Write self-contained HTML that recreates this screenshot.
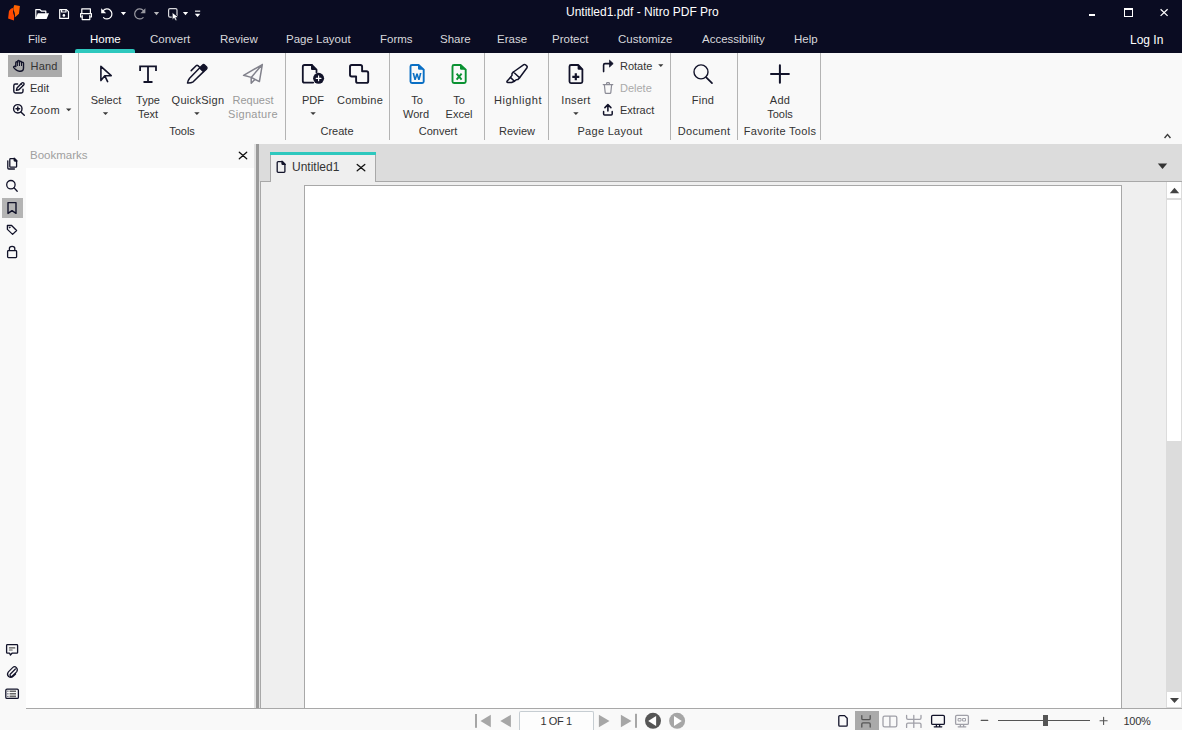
<!DOCTYPE html>
<html><head><meta charset="utf-8">
<style>
*{margin:0;padding:0;box-sizing:border-box}
html,body{width:1182px;height:730px;overflow:hidden;background:#f9f9f9;font-family:"Liberation Sans",sans-serif}
.a{position:absolute}
.t{position:absolute;margin-top:-1px;white-space:nowrap;line-height:11px;font-size:11px;color:#333}
.c{position:absolute;margin-top:-1px;white-space:nowrap;line-height:11px;font-size:11px;color:#333;width:120px;text-align:center}
.hdr{left:0;top:0;width:1182px;height:53px;background:#0a0c22}
.tab{position:absolute;top:34px;font-size:11.5px;line-height:11px;color:#d8d8dc;white-space:nowrap}
.sep{position:absolute;top:53px;width:1px;height:87px;background:#b4b4b4}
svg{position:absolute;overflow:visible}
</style></head><body>
<!-- header -->
<div class="a hdr"></div>
<div class="a" style="left:75px;top:49px;width:60px;height:4px;background:#2ec8be;border-radius:2px 2px 0 0"></div>
<div class="tab" style="left:28px">File</div>
<div class="tab" style="left:90px;color:#fff">Home</div>
<div class="tab" style="left:150px">Convert</div>
<div class="tab" style="left:220px">Review</div>
<div class="tab" style="left:286px">Page Layout</div>
<div class="tab" style="left:380px">Forms</div>
<div class="tab" style="left:440px">Share</div>
<div class="tab" style="left:497px">Erase</div>
<div class="tab" style="left:552px">Protect</div>
<div class="tab" style="left:618px">Customize</div>
<div class="tab" style="left:702px">Accessibility</div>
<div class="tab" style="left:794px">Help</div>
<div class="tab" style="left:1130px;top:35px;color:#fff;font-size:12px">Log In</div>
<div class="tab" style="left:566px;top:7px;color:#fff;font-size:12px">Untitled1.pdf - Nitro PDF Pro</div>

<!-- ribbon -->
<div class="a" style="left:8px;top:55px;width:54px;height:22px;background:#ababab"></div>
<div class="t" style="left:30.5px;top:62px;letter-spacing:0.2px">Hand</div>
<div class="t" style="left:30px;top:84px">Edit</div>
<div class="t" style="left:30px;top:106px;letter-spacing:0.5px">Zoom</div>
<div class="sep" style="left:78px"></div>
<div class="sep" style="left:285px"></div>
<div class="sep" style="left:389px"></div>
<div class="sep" style="left:484px"></div>
<div class="sep" style="left:548px"></div>
<div class="sep" style="left:670px"></div>
<div class="sep" style="left:737px"></div>
<div class="sep" style="left:820px"></div>

<div class="c" style="left:46px;top:96px">Select</div>
<div class="c" style="left:88px;top:96px">Type</div>
<div class="c" style="left:88px;top:110px">Text</div>
<div class="c" style="left:138px;top:96px;letter-spacing:0.3px">QuickSign</div>
<div class="c" style="left:193px;top:96px;color:#999">Request</div>
<div class="c" style="left:193px;top:110px;color:#999;letter-spacing:0.3px">Signature</div>
<div class="c" style="left:122px;top:127px">Tools</div>
<div class="c" style="left:253px;top:96px">PDF</div>
<div class="c" style="left:300px;top:96px;letter-spacing:0.3px">Combine</div>
<div class="c" style="left:277px;top:127px">Create</div>
<div class="c" style="left:357px;top:96px">To</div>
<div class="c" style="left:356px;top:110px">Word</div>
<div class="c" style="left:399px;top:96px">To</div>
<div class="c" style="left:399px;top:110px">Excel</div>
<div class="c" style="left:378px;top:127px">Convert</div>
<div class="c" style="left:458px;top:96px;letter-spacing:0.6px">Highlight</div>
<div class="c" style="left:457px;top:127px">Review</div>
<div class="c" style="left:516px;top:96px;letter-spacing:0.3px">Insert</div>
<div class="t" style="left:620px;top:62px">Rotate</div>
<div class="t" style="left:620px;top:84px;color:#aaa">Delete</div>
<div class="t" style="left:620px;top:106px">Extract</div>
<div class="c" style="left:550px;top:127px;letter-spacing:0.3px">Page Layout</div>
<div class="c" style="left:643px;top:96px;letter-spacing:0.3px">Find</div>
<div class="c" style="left:644px;top:127px;letter-spacing:0.3px">Document</div>
<div class="c" style="left:720px;top:96px;letter-spacing:0.3px">Add</div>
<div class="c" style="left:720px;top:110px">Tools</div>
<div class="c" style="left:720px;top:127px;letter-spacing:0.3px">Favorite Tools</div>

<!-- workspace -->
<div class="a" style="left:0;top:144px;width:26px;height:586px;background:#f9f9f9"></div>
<div class="a" style="left:26px;top:144px;width:228px;height:24px;background:#f9f9f9"></div>
<div class="a" style="left:26px;top:168px;width:228px;height:540px;background:#fff"></div>
<div class="t" style="left:30px;top:151px;color:#a0a0a0;font-size:11.5px">Bookmarks</div>
<div class="a" style="left:2px;top:198px;width:21px;height:20px;background:#b4b4b4"></div>
<div class="a" style="left:254px;top:144px;width:2px;height:564px;background:#e2e2e2"></div>
<div class="a" style="left:256px;top:144px;width:3px;height:564px;background:#9a9a9a"></div>
<div class="a" style="left:259px;top:144px;width:923px;height:38px;background:#dcdcdc"></div>
<div class="a" style="left:259px;top:182px;width:1px;height:526px;background:#e2e2e2"></div>
<div class="a" style="left:260px;top:181px;width:922px;height:527px;background:#efefef;border-left:1px solid #a8a8a8;border-top:1px solid #a8a8a8"></div>
<div class="a" style="left:270px;top:152px;width:106px;height:30px;background:#efefef;border-left:1px solid #a8a8a8;border-right:1px solid #a8a8a8"></div>
<div class="a" style="left:271px;top:181px;width:104px;height:1px;background:#efefef"></div>
<div class="a" style="left:270px;top:152px;width:106px;height:3px;background:#2ec8be"></div>
<div class="t" style="left:292px;top:163px;font-size:12px">Untitled1</div>
<div class="a" style="left:304px;top:185px;width:818px;height:523px;background:#fff;border:1px solid #a8a8a8;border-bottom:none"></div>
<!-- scrollbar -->
<div class="a" style="left:1166px;top:182px;width:16px;height:526px;background:#dcdcdc"></div>
<div class="a" style="left:1167px;top:182px;width:14px;height:16px;background:#fff"></div>
<div class="a" style="left:1167px;top:200px;width:14px;height:241px;background:#fff"></div>
<div class="a" style="left:1167px;top:692px;width:14px;height:15px;background:#fff"></div>

<!-- status bar -->
<div class="a" style="left:26px;top:708px;width:1156px;height:22px;background:#f9f9f9;border-top:1px solid #a8a8a8"></div>
<div class="a" style="left:519px;top:711px;width:75px;height:19px;background:#fdfdfd;border:1px solid #c6cdd2;border-bottom:none;border-radius:2px 2px 0 0"></div>
<div class="t" style="left:540.5px;top:717px;letter-spacing:-0.4px">1 OF 1</div>
<div class="a" style="left:855px;top:711px;width:24px;height:19px;background:#aaaaaa"></div>
<div class="a" style="left:998px;top:720px;width:92px;height:1px;background:#555"></div>
<div class="a" style="left:1043px;top:715px;width:5px;height:11px;background:#555"></div>
<div class="t" style="left:1123.5px;top:717px;letter-spacing:-0.3px">100%</div>

<svg class="a" style="left:0;top:0" width="1182" height="730" viewBox="0 0 1182 730">
<g fill="none" stroke-linecap="round" stroke-linejoin="round">
<!-- logo -->
<path d="M14.4,5 L19.9,6.1 L19,13.8 L15.6,16.7 L14.9,16.9 C15.1,14.6 14.8,12.4 13.9,10.9 C13.3,9.8 13.2,8.6 13.5,7.2 Z" fill="#ff6200" stroke="none"/>
<path d="M12.5,7.9 C11,8.4 9.6,9.6 8.9,11.4 L8.1,18.4 L13.9,20.6 L14.2,16.4 C14.1,15.2 13.5,14.4 13.3,13.6 C13,12.5 13,11.4 13.1,10.4 L13,8.2 Z" fill="#ff4800" stroke="none"/>
<!-- quick access (white) -->
<g stroke="#fff" stroke-width="1.2">
<path d="M35.8,18.6 V9.7 H40 L41.6,11.2 H45.8 V13.4"/>
<path d="M59.7,9.6 H66.4 L68.5,11.7 V18.4 H59.7 Z"/>
<path d="M61.6,9.6 V12 H66 V9.6"/>
<path d="M81.8,13.4 V8.8 H90.4 V13.4"/>
<path d="M82,17 H80.6 V13.6 H91.4 V17 H90"/>
<path d="M82.2,15.6 V19.6 H89.8 V15.6"/>
<path d="M103.2,10.6 A5,5 0 1 1 103.5,17.6"/>
</g>
<path d="M37.8,13.2 H49 L46.6,19.1 H35.4 Z" fill="#fff"/>
<circle cx="63.9" cy="15.4" r="1.3" fill="#fff"/>
<path d="M101.2,8.2 V13.2 H106.2 Z" fill="#fff"/>
<path d="M120.8,12 H126.1 L123.45,15.2 Z" fill="#fff"/>
<g stroke="#9a9aa2" stroke-width="1.2"><path d="M143.4,10.6 A5,5 0 1 0 143.1,17.6"/></g>
<path d="M145.4,8.2 V13.2 H140.4 Z" fill="#9a9aa2"/>
<path d="M153.9,12 H159.1 L156.5,15.2 Z" fill="#b8b8bc"/>
<rect x="168.6" y="8.6" width="8.4" height="8.6" rx="1.4" stroke="#d8d8dc" stroke-width="1.2"/>
<path d="M172.2,12.4 V20 L174.2,18.3 L175.7,21 L177.2,20.3 L175.8,17.6 L178.4,17.5 Z" fill="#fff" stroke="#0a0c22" stroke-width="0.8"/>
<path d="M182.9,12 H188.1 L185.5,15.2 Z" fill="#fff"/>
<rect x="195" y="10.6" width="5.2" height="1.1" fill="#fff" stroke="none"/>
<path d="M194.8,13.8 H200.3 L197.55,17 Z" fill="#fff"/>
<!-- window controls -->
<rect x="1089" y="14" width="6" height="2" fill="#fff"/>
<path d="M1124,8 H1133 V17 H1124 Z M1125,10 V16 H1132 V10 Z" fill="#fff" fill-rule="evenodd" stroke="none"/>
<path d="M1160.6,9.3 L1167.6,15.9 M1167.6,9.3 L1160.6,15.9" stroke="#fff" stroke-width="1.25" stroke-linecap="butt"/>
</g>
</svg>

<svg class="a" style="left:0;top:0" width="1182" height="730" viewBox="0 0 1182 730">
<g fill="none" stroke="#12132a" stroke-width="1.4" stroke-linecap="round" stroke-linejoin="round">
<!-- hand -->
<path d="M15.8,66.4 V62.8 Q15.8,61.7 16.7,61.7 Q17.6,61.7 17.6,62.6 V61.4 Q17.6,60.5 18.55,60.5 Q19.5,60.5 19.5,61.4 V62.1 Q19.5,61.2 20.5,61.2 Q21.5,61.2 21.5,62.2 V63.1 Q21.5,62.2 22.5,62.2 Q23.5,62.2 23.5,63.2 V68 Q23.5,71.2 20.2,71.2 H19.2 Q17.2,71.2 15.6,69.6 L13.8,67.6 Q13.3,66.7 14.2,66.3 Q15,66 15.8,66.6"/>
<path d="M17.6,62.6 V65.6 M19.5,62.1 V65.6 M21.5,63.1 V65.6" stroke-width="1"/>
<!-- edit -->
<path d="M17.6,84 H15.5 Q13.8,84 13.8,85.7 V91.3 Q13.8,93 15.5,93 H21.3 Q23,93 23,91.3 V89.2"/>
<path d="M16.4,90.4 L17,88 L21.9,83.1 Q22.8,82.2 23.7,83.1 Q24.6,84 23.7,84.9 L18.8,89.8 Z"/>
<path d="M21.1,83.9 L22.9,85.7" stroke-width="1"/>
<!-- zoom -->
<circle cx="17.8" cy="108.8" r="4.2"/>
<path d="M20.9,111.9 L24.3,115.3"/>
<path d="M17.8,107 V110.6 M16,108.8 H19.6" stroke-width="1.5"/>
<!-- select pointer -->
<path d="M100.9,66.3 V80.6 L104.8,75.7 H111.2 Z M104.8,75.9 L107.6,81.6" stroke-width="1.6"/>
<!-- T -->
<path d="M140.1,70 V66.4 H156 V70 M148,66.4 V82 M144.4,82 H151.6" stroke-width="1.8" stroke-linecap="square" stroke-linejoin="miter"/>
<!-- pen -->
<path d="M187.5,83 Q187.9,80.4 189.6,78.2 L199.8,67.8 L203.6,71.6 L193.2,81.8 Q190.8,83.2 187.5,83 Z" stroke-width="1.5"/>
<path d="M199.8,67.8 L202.4,65.2 Q203.6,64 204.8,65.2 L206.4,66.8 Q207.6,68 206.4,69.2 L203.6,71.6 Z" fill="#12132a"/>
<path d="M191.2,70.6 L196.1,65.7 Q197,64.9 197.9,65.6 L199.7,67.3" stroke-width="1.5"/>
<!-- plane -->
<path d="M243.6,75.3 L262.3,64.6 L259.4,81.6 L251.2,77.4 Z M262.3,64.6 L251.2,77.4 V83.2 L254.8,79.4" stroke="#82828c" stroke-width="1.5"/>
<!-- PDF -->
<path d="M311.8,65 H304.5 Q302.8,65 302.8,66.7 V80.9 Q302.8,82.6 304.5,82.6 H313.2" stroke-width="1.8"/>
<path d="M311.8,65 L316.5,69.7 V72.4" stroke-width="1.8"/>
<path d="M311,64.3 V68.9 Q311,70 312.1,70 H317 Z" fill="#12132a" stroke="none"/>
<circle cx="318.6" cy="78.3" r="5.5" fill="#12132a" stroke="none"/>
<path d="M318.6,75.9 V80.7 M316.2,78.3 H321" stroke="#fff" stroke-width="1.2"/>
<!-- combine -->
<path d="M351.8,65 H360.4 Q362.1,65 362.1,66.7 V71.2 H366.5 Q368.2,71.2 368.2,72.9 V81.2 Q368.2,82.9 366.5,82.9 H357.8 Q356.1,82.9 356.1,81.2 V76.5 H351.7 Q350,76.5 350,74.8 V66.7 Q350,65 351.7,65 Z" stroke-width="1.9"/>
<!-- word -->
<path d="M418.6,65 H412 Q410.5,65 410.5,66.5 V81.5 Q410.5,83 412,83 H422.2 Q423.7,83 423.7,81.5 V69.6 Z" stroke="#0a6fc4" stroke-width="1.9"/>
<path d="M418,64.3 V68.6 Q418,69.8 419.2,69.8 H424.4 Z" fill="#0a6fc4" stroke="none"/>
<path d="M412.5,73.1 L414.3,80 H415.8 L417,76.2 L418.2,80 H419.7 L421.5,73.1 H419.8 L418.9,77.2 L417.8,73.5 H416.2 L415.1,77.2 L414.2,73.1 Z" fill="#0a6fc4" stroke="none"/>
<!-- excel -->
<path d="M460.6,65 H454 Q452.5,65 452.5,66.5 V81.5 Q452.5,83 454,83 H464.2 Q465.7,83 465.7,81.5 V69.6 Z" stroke="#0a9232" stroke-width="1.9"/>
<path d="M460,64.3 V68.6 Q460,69.8 461.2,69.8 H466.4 Z" fill="#0a9232" stroke="none"/>
<path d="M456.6,73.6 L461.6,79.6 M461.6,73.6 L456.6,79.6" stroke="#0a9232" stroke-width="1.9" stroke-linecap="butt"/>
<!-- highlighter -->
<path d="M513.4,72 L523.8,64.7 Q524.7,64.1 525.5,64.8 L526.9,66.1 Q527.6,66.9 527,67.7 L519.6,77.8 Z" stroke-width="1.5"/>
<path d="M513.4,72 L512,73.6 V75.4 L510.4,77.4 L514.4,81.3 L516.2,79.7 L517.8,79.6 L519.6,77.8" stroke-width="1.5"/>
<path d="M510.4,77.4 L507,81.2 Q506.6,82.4 507.8,82.5 L511.6,82.5 L514.4,81.3" stroke-width="1.5"/>
<!-- insert -->
<path d="M578.2,65 H571 Q569.5,65 569.5,66.5 V81.6 Q569.5,83.1 571,83.1 H580.9 Q582.4,83.1 582.4,81.6 V69.3 Z" stroke-width="1.8"/>
<path d="M577.6,64.2 V68.6 Q577.6,69.8 578.8,69.8 H583.2 Z" fill="#12132a" stroke="none"/>
<path d="M572.3,76.8 H579.3 M575.8,73.3 V80.3" stroke-width="2.2" stroke-linecap="butt"/>
<!-- rotate -->
<path d="M603.6,71.6 V65 Q603.6,63.6 605,63.6 H610.2" stroke-width="1.6"/>
<path d="M609.8,60.4 L613.2,63.6 L609.8,66.8 Z" fill="#12132a" stroke-width="0.8"/>
<!-- delete -->
<path d="M603.2,84.6 H612.8 M606.6,84.4 V83.4 Q606.6,82.6 607.4,82.6 H608.6 Q609.4,82.6 609.4,83.4 V84.4 M604.4,85 L605.2,92.6 Q605.3,93.4 606.1,93.4 H609.9 Q610.7,93.4 610.8,92.6 L611.6,85" stroke="#8a8a95" stroke-width="1.2"/>
<!-- extract -->
<path d="M607.9,105 V111 M604.9,107.6 L607.9,104.6 L610.9,107.6" stroke-width="1.6"/>
<path d="M603.6,111.6 V114 Q603.6,115 604.6,115 H611.2 Q612.2,115 612.2,114 V111.6" stroke-width="1.5"/>
<!-- find -->
<circle cx="701" cy="71.9" r="7"/>
<path d="M706.2,77.3 L712,83.1" stroke-width="1.7"/>
<!-- plus -->
<path d="M779.9,65.2 V82.8 M771,73.9 H788.9" stroke-width="2"/>
</g>
<g fill="#3a3a3a">
<path d="M66,108.6 H71.4 L68.7,111.2 Z"/>
<path d="M102.8,112.2 H108.2 L105.5,114.9 Z"/>
<path d="M194.2,112.2 H199.6 L196.9,114.9 Z"/>
<path d="M310.4,112.2 H315.8 L313.1,114.9 Z"/>
<path d="M573.2,112.2 H578.6 L575.9,114.9 Z"/>
<path d="M658.2,64.2 H663.4 L660.8,66.9 Z"/>
<path d="M1164,137.6 L1167.5,133.4 L1171,137.6 L1169.9,138.5 L1167.5,135.6 L1165.1,138.5 Z"/>
</g>
</svg>

<svg class="a" style="left:0;top:0" width="1182" height="730" viewBox="0 0 1182 730">
<g fill="none" stroke="#12132a" stroke-width="1.3" stroke-linecap="round" stroke-linejoin="round">
<!-- pages -->
<path d="M14.4,158.6 H10.6 Q9.8,158.6 9.8,159.4 V166.4 Q9.8,167.2 10.6,167.2 H15.8 Q16.6,167.2 16.6,166.4 V160.8 Z"/>
<path d="M14.2,158.3 V160.2 Q14.2,161 15,161 H16.9 Z" fill="#12132a"/>
<path d="M7.8,160.8 V168 Q7.8,169 8.8,169 H14.4"/>
<!-- search -->
<circle cx="10.9" cy="184.7" r="4.2"/>
<path d="M14,187.8 L17.2,191.2"/>
<!-- bookmark -->
<path d="M8,202.6 H16 V213.4 L12,210.6 L8,213.4 Z" stroke-width="1.4"/>
<!-- tag -->
<path d="M7.4,225.5 H11.6 L16.6,230.5 L12.6,234.4 L7.4,229.4 Z"/>
<circle cx="9.6" cy="227.6" r="0.5" fill="#12132a" stroke-width="0.6"/>
<!-- lock -->
<rect x="7.6" y="250.6" width="9" height="7" rx="0.8"/>
<path d="M9.4,250.4 V248.6 Q9.4,246.4 12.1,246.4 Q14.8,246.4 14.8,248.6 V250.4"/>
<!-- comment -->
<path d="M7.4,644.6 H16.8 Q17.6,644.6 17.6,645.4 V652.4 Q17.6,653.2 16.8,653.2 H12 L10.4,655 L9.6,653.2 H7.4 Q6.6,653.2 6.6,652.4 V645.4 Q6.6,644.6 7.4,644.6 Z"/>
<path d="M9.4,647.9 H14.8 M9.4,650 H12.2" stroke-width="1.1" stroke="#555"/>
<!-- clip -->
<path d="M15.4,669 L10.4,674 Q9.4,675 10.4,676 Q11.4,677 12.4,676 L16.6,671.8 Q18.2,669.8 16.4,667.6 Q14.6,665.8 12.6,667.6 L8.4,671.8 Q6.4,674.2 8.6,676.6 Q11,678.4 13.2,676.4 L15.6,674" stroke-width="1.2"/>
<!-- list -->
<rect x="5.8" y="689.2" width="12.6" height="9.2" rx="1.2"/>
<path d="M9.6,691.2 H16 M9.6,693.8 H16 M9.6,696.4 H16" stroke="#666" stroke-width="1.6" stroke-linecap="butt"/>
<path d="M7.9,691 V691.4 M7.9,693.6 V694 M7.9,696.2 V696.6" stroke-width="0.9"/>
<!-- bookmarks close -->
<path d="M239.3,152.3 L246.7,158.7 M246.7,152.3 L239.3,158.7" stroke="#111" stroke-width="1.3"/>
<!-- tab doc icon -->
<path d="M282.4,161.6 H278.2 Q277.2,161.6 277.2,162.6 V171.6 Q277.2,172.4 278.2,172.4 H284 Q284.9,172.4 284.9,171.6 V164.2 Z" stroke-width="1.3"/>
<path d="M282,161.3 V163.5 Q282,164.4 282.9,164.4 H285.2 Z" fill="#12132a"/>
<!-- tab close -->
<path d="M357.2,164.4 L364.8,170.8 M364.8,164.4 L357.2,170.8" stroke="#111" stroke-width="1.3"/>
</g>
<g fill="#333">
<path d="M1157.8,163.6 H1167.2 L1162.5,169 Z"/>
<path d="M1169.8,193.2 H1179.2 L1174.5,187.8 Z" fill="#444"/>
<path d="M1170,698 H1179 L1174.5,703 Z" fill="#444"/>
</g>
<!-- status bar nav -->
<g fill="#a6a6a6">
<rect x="475" y="714" width="2" height="13.8"/>
<path d="M480.5,721 L490.8,714.8 V727.2 Z"/>
<path d="M500.3,721 L510.9,714.8 V727.2 Z"/>
<path d="M609.5,721 L598.9,714.8 V727.2 Z"/>
<path d="M631.5,721 L620.9,714.8 V727.2 Z"/>
<rect x="635" y="713.8" width="2" height="14"/>
<circle cx="677.1" cy="720.8" r="8"/>
</g>
<circle cx="653" cy="720.8" r="8" fill="#555"/>
<path d="M648.2,720.9 L656.1,716.1 V725.9 Z" fill="#fff"/>
<path d="M681.8,720.9 L674,716.1 V725.9 Z" fill="#fff"/>
<!-- view icons -->
<g fill="none" stroke-width="1.3" stroke-linecap="round" stroke-linejoin="round">
<path d="M844.6,715.6 H839.8 Q838.8,715.6 838.8,716.6 V725.2 Q838.8,726.2 839.8,726.2 H846.2 Q847.2,726.2 847.2,725.2 V718.2 Z" stroke="#12132a"/>
<path d="M861.8,715.6 V718.4 Q861.8,719.6 863,719.6 H869 Q870.2,719.6 870.2,718.4 V715.6 M861.8,727 V724 Q861.8,722.8 863,722.8 H869 Q870.2,722.8 870.2,724 V727" stroke="#555"/>
<path d="M884.6,716.2 H895.2 Q896.8,716.2 896.8,717.8 V725.2 Q896.8,726.8 895.2,726.8 H884.6 Q883,726.8 883,725.2 V717.8 Q883,716.2 884.6,716.2 Z M889.9,716.2 V726.8" stroke="#a0a0a8"/>
<path d="M906.6,715.4 V718 Q906.6,719.4 908,719.4 H919.6 Q921,719.4 921,718 V715.4 M913.8,715.4 V727.4 M906.6,727.4 V724.6 Q906.6,723.2 908,723.2 H919.6 Q921,723.2 921,724.6 V727.4" stroke="#a0a0a8"/>
<rect x="931.6" y="715.4" width="12.8" height="9" rx="1.2" stroke="#12132a"/>
<path d="M936.4,725 V726.2 M939.6,725 V726.2 M934.2,726.8 H941.8" stroke="#12132a"/>
<rect x="955.6" y="715.4" width="12.8" height="9" rx="1.2" stroke="#a0a0a8"/>
<path d="M960.4,725 V726.2 M963.6,725 V726.2 M958.2,726.8 H965.8" stroke="#a0a0a8"/>
<path d="M958.5,718.5 H961 V721 H958.5 Z M963,718.5 H965.5 V721 H963 Z" stroke="#a0a0a8" stroke-width="1"/>
<path d="M981.2,720.4 H987.8" stroke="#555" stroke-width="1.1"/>
<path d="M1100,720.8 H1107.2 M1103.6,717.2 V724.4" stroke="#555" stroke-width="1.1"/>
</g>
</svg>
</body></html>
